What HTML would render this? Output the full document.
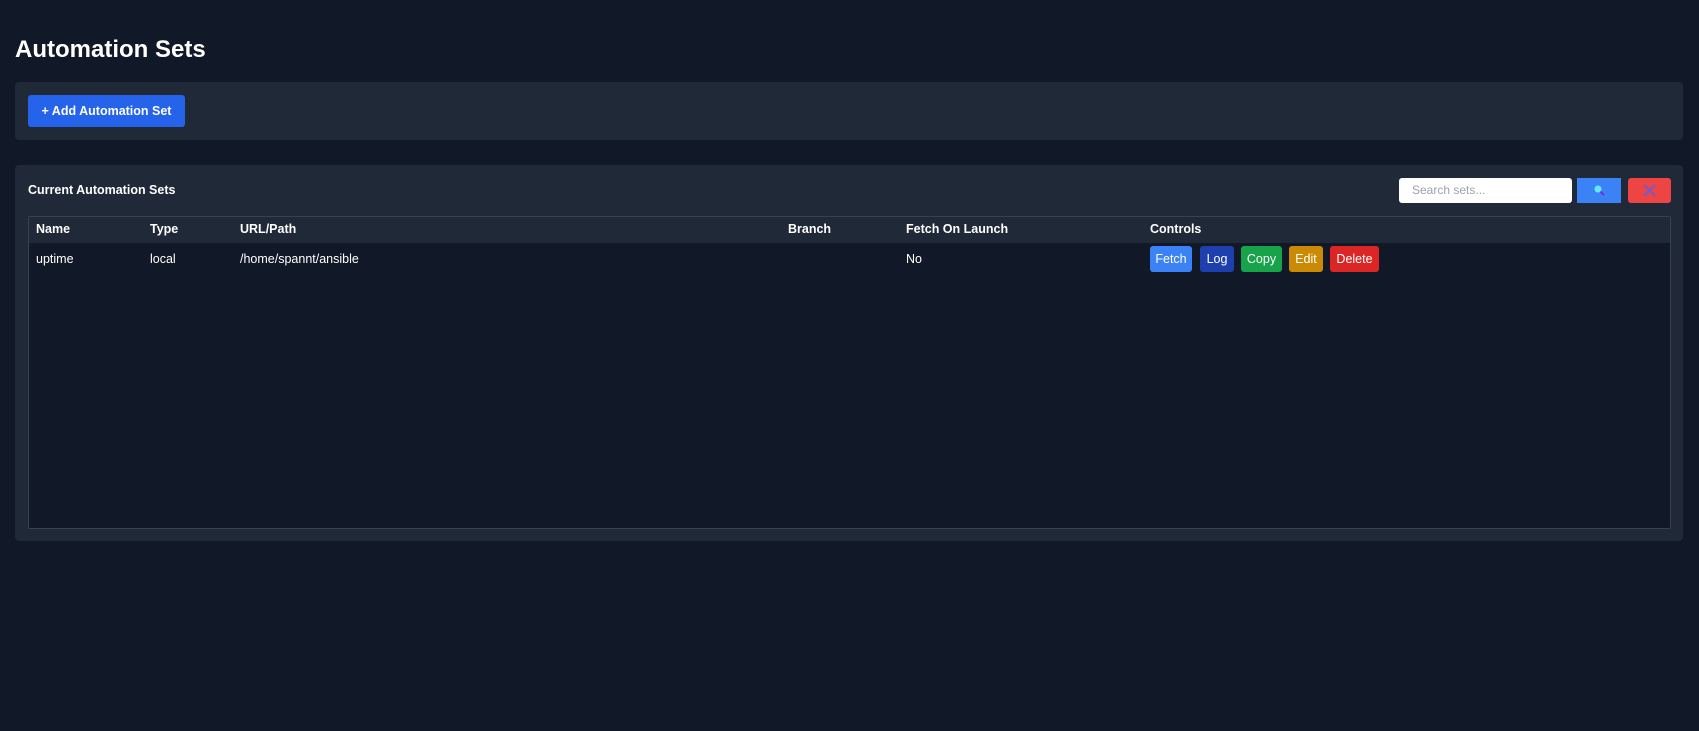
<!DOCTYPE html>
<html><head><style>
body{margin:0;background:#111827;font-family:"Liberation Sans",sans-serif;color:#fff;width:1699px;height:731px;overflow:hidden;position:relative}
.a{position:absolute}
h1{position:absolute;left:15px;top:34px;margin:0;font-size:24px;font-weight:bold;line-height:32px}
.p{position:absolute;left:15px;width:1668px;background:#1f2937;border-radius:4px}
.b{position:absolute;border-radius:3px;font-size:12.5px;color:#fff;text-align:center;line-height:26px;height:26px;top:246px}
.th{position:absolute;top:222px;font-size:12.5px;font-weight:bold}
.td{position:absolute;top:252px;font-size:12.5px}
</style></head><body>
<h1>Automation Sets</h1>
<div class="p" style="top:82px;height:58px"></div>
<div class="a" style="left:28px;top:95px;width:157px;height:32px;background:#2563eb;border-radius:3px;font-size:12.5px;font-weight:bold;line-height:32px;text-align:center">+ Add Automation Set</div>
<div class="p" style="top:165px;height:376px"></div>
<div class="a" style="left:28px;top:183px;font-size:12.5px;font-weight:bold">Current Automation Sets</div>
<div class="a" style="left:1399px;top:178px;width:173px;height:25px;background:#fff;border-radius:3px;color:#9ca3af;font-size:12px;line-height:25px;text-indent:13px">Search sets...</div>
<div class="a" style="left:1577px;top:178px;width:44px;height:25px;background:#3b82f6;text-align:center;line-height:25px;font-size:12px">
<svg width="12" height="12" viewBox="0 0 12 12" style="margin-top:6px"><circle cx="5" cy="5" r="3.5" fill="#67e8f9"/><path d="M7.5 7.5L11 11" stroke="#7e22ce" stroke-width="1.8"/></svg></div>
<div class="a" style="left:1628px;top:178px;width:43px;height:25px;background:#ef4444;border-radius:3px">
<svg width="43" height="25"><path d="M16 7L27 18M27 7L16 18" stroke="#6d5bd0" stroke-width="2"/></svg></div>
<div class="a" style="left:28px;top:216px;width:1641px;height:311px;border:1px solid #374151;background:#111827;border-radius:2px"></div>
<div class="a" style="left:29px;top:217px;width:1641px;height:26px;background:#1f2937"></div>
<div class="th" style="left:36px">Name</div><div class="th" style="left:150px">Type</div><div class="th" style="left:240px">URL/Path</div><div class="th" style="left:788px">Branch</div><div class="th" style="left:906px">Fetch On Launch</div><div class="th" style="left:1150px">Controls</div>
<div class="td" style="left:36px">uptime</div><div class="td" style="left:150px">local</div><div class="td" style="left:240px">/home/spannt/ansible</div><div class="td" style="left:906px">No</div>
<div class="b" style="left:1150px;width:42px;background:#3b82f6">Fetch</div>
<div class="b" style="left:1200px;width:34px;background:#1e40af">Log</div>
<div class="b" style="left:1241px;width:41px;background:#16a34a">Copy</div>
<div class="b" style="left:1289px;width:34px;background:#ca8a04">Edit</div>
<div class="b" style="left:1330px;width:49px;background:#dc2626">Delete</div>
</body></html>
